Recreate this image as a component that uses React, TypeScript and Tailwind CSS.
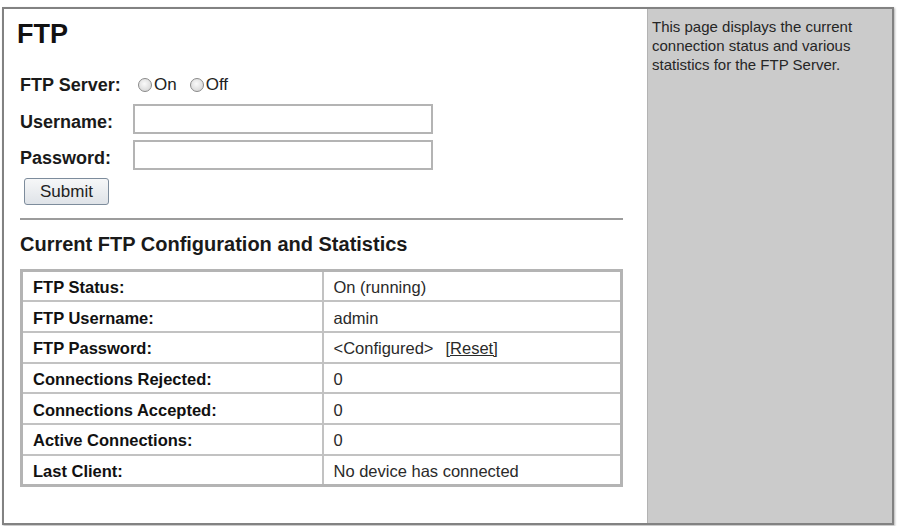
const STATS = [
  ["FTP Status:", "On (running)"],
  ["FTP Username:", "admin"],
  ["FTP Password:", "<Configured>"],
  ["Connections Rejected:", "0"],
  ["Connections Accepted:", "0"],
  ["Active Connections:", "0"],
  ["Last Client:", "No device has connected"],
];

const LABEL_STYLES = "w-[113px] shrink-0 text-[18px] font-bold leading-[24px] text-[#1a1a1a]";
const INPUT_STYLES = "h-[30px] w-[300px] border-2 border-[#b4b4b4] bg-white px-1 text-[16px] outline-none";
const CELL_STYLES = "h-[30.7px] border-2 border-[#c2c2c2] pl-[10px] pt-[2px] align-middle text-[16.5px] leading-[20px]";

const Radio = ({ label }: { label: string }) => (
  <label className="flex items-center gap-[2px] text-[17px] text-[#222]">
    <span className="h-[14px] w-[14px] rounded-full border border-[#8a8a8a] bg-[radial-gradient(circle_at_45%_40%,#fafafa,#cfcfcf)]" />
    {label}
  </label>
);

const App = () => {
  return (
    <div className="h-[526px] w-[898px] bg-white pl-[2px] pt-[7px] font-['Liberation_Sans',Arial,sans-serif]">
      <div className="flex h-[518px] w-[892px] border-2 border-[#828282] shadow-[1px_1px_2px_rgba(0,0,0,0.3)]">
        <div className="w-[643px] shrink-0 pl-[16px] pt-[9px]">
          <h1 className="-ml-[3px] text-[27px] font-bold leading-[32px] text-[#111]">FTP</h1>

          <div className="mt-[23px] flex h-[24px] items-center">
            <span className={LABEL_STYLES}>FTP Server:</span>
            <div className="ml-[5px] flex items-center gap-[13px]">
              <Radio label="On" />
              <Radio label="Off" />
            </div>
          </div>
          <div className="mt-[7px] flex h-[30px]">
            <span className={`${LABEL_STYLES} pt-[6px]`}>Username:</span>
            <input className={INPUT_STYLES} type="text" />
          </div>
          <div className="mt-[6px] flex h-[30px]">
            <span className={`${LABEL_STYLES} pt-[6px]`}>Password:</span>
            <input className={INPUT_STYLES} type="password" />
          </div>
          <button className="ml-[4px] mt-[8px] h-[27px] w-[85px] rounded-[3px] border border-[#7d8c9c] bg-gradient-to-b from-[#f6f7f8] to-[#dfe3e8] text-[17px] text-[#222]">
            Submit
          </button>

          <div className="mt-[13px] h-[2px] w-[603px] bg-[#9c9c9c]" />

          <h2 className="mt-[12px] text-[20px] font-bold leading-[24px] text-[#1a1a1a]">
            Current FTP Configuration and Statistics
          </h2>

          <table className="mt-[13px] w-[603px] border-collapse border-[3px] border-[#b4b4b4]">
            <tbody>
              {STATS.map(([label, value]) => (
                <tr key={label}>
                  <td className={`${CELL_STYLES} w-[301px] font-bold text-[#111]`}>{label}</td>
                  <td className={`${CELL_STYLES} text-[#2a2a2a]`}>
                    {value}
                    {label === "FTP Password:" && (
                      <a className="ml-[12px] underline">[Reset]</a>
                    )}
                  </td>
                </tr>
              ))}
            </tbody>
          </table>
        </div>

        <div className="flex-1 border-l border-[#b3b3b3] bg-[#cbcbcb] pl-[4px] pr-[8px] pt-[8px] text-[15px] leading-[19px] text-[#262626]">
          This page displays the current connection status and various statistics for the FTP Server.
        </div>
      </div>
    </div>
  );
};

export default App;
